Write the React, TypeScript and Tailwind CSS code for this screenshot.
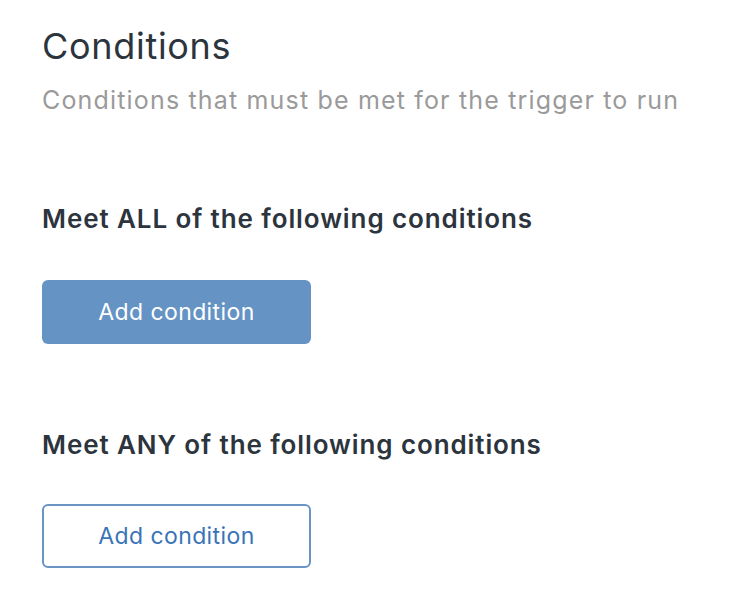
export default function App() {
  return (
    <div className="min-h-screen bg-white px-[42px] pt-[22px] font-['Inter','Liberation_Sans',sans-serif]">
      {/* Header */}
      <h1 className="text-[36px] leading-[48px] tracking-[0.7px] text-[#2c343d]">Conditions</h1>
      <p className="mt-[14px] text-[25px] leading-[32px] tracking-[1.17px] text-[#9a9a9a]">Conditions that must be met for the trigger to run</p>

      {/* ALL */}
      <h2 className="mt-[87px] text-[26px] leading-[32px] tracking-[0.9px] font-semibold text-[#2c343d]">Meet ALL of the following conditions</h2>
      <button className="mt-[45px] w-[269px] h-[64px] rounded-[6px] bg-[#6493c4] text-white text-[23px] tracking-[0.4px]">
        Add condition
      </button>

      {/* ANY */}
      <h2 className="mt-[85px] text-[26px] leading-[32px] tracking-[0.9px] font-semibold text-[#2c343d]">Meet ANY of the following conditions</h2>
      <button className="mt-[43px] w-[269px] h-[64px] rounded-[6px] border-2 border-[#6a94c4] bg-white text-[#3a73b8] text-[23px] tracking-[0.4px]">
        Add condition
      </button>
    </div>
  )
}
